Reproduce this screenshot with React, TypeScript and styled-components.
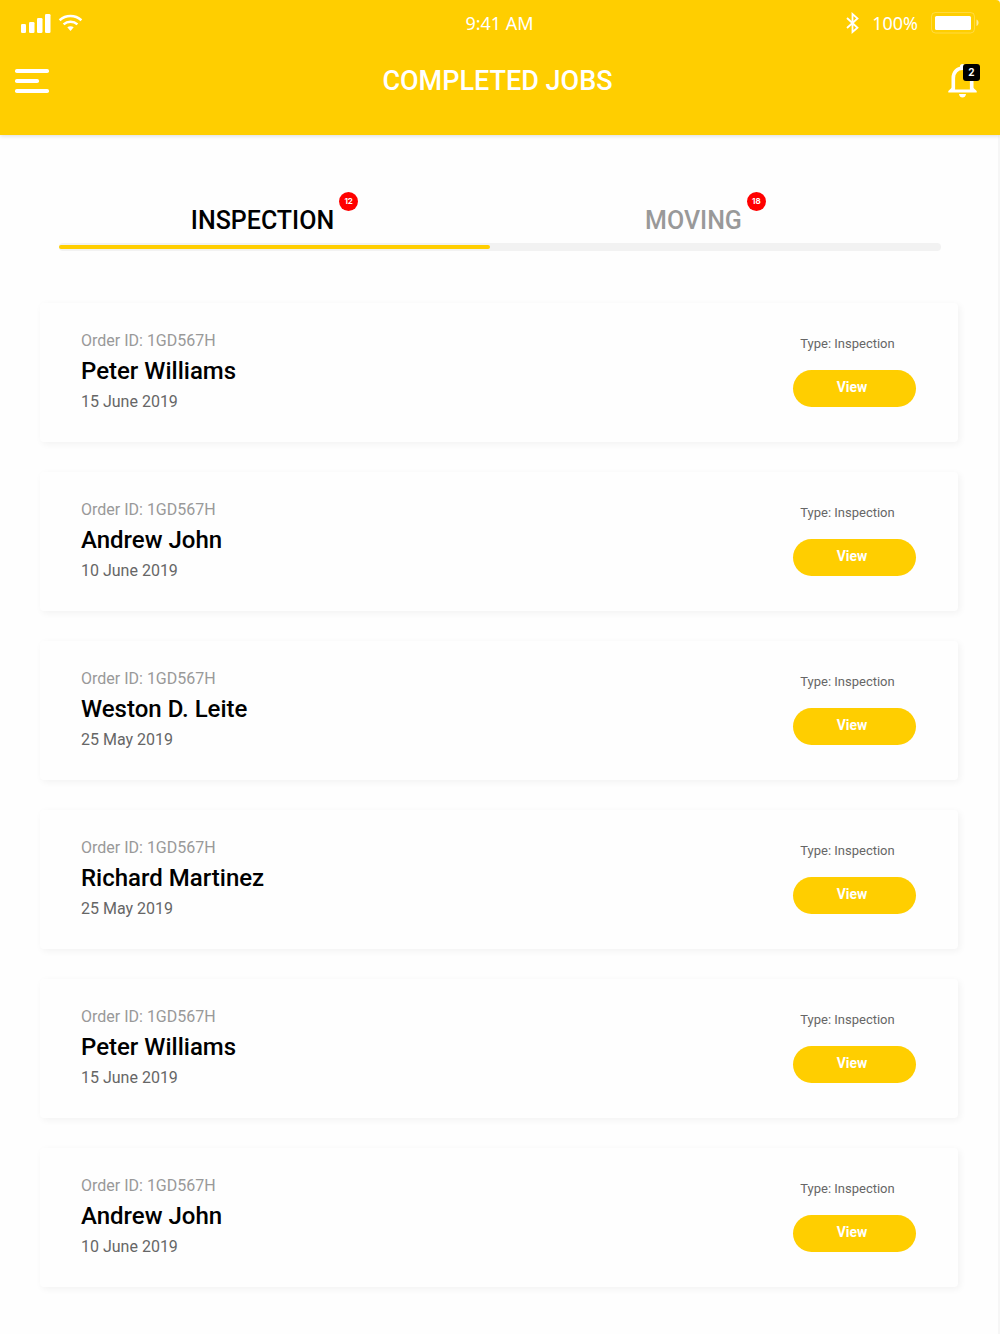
import React, { useState } from 'react';
import styled, { createGlobalStyle } from 'styled-components';

const YELLOW = '#ffce00';

const GlobalStyle = createGlobalStyle`
  * { box-sizing: border-box; }
  body {
    margin: 0;
    background: #fefefe;
    font-family: Roboto, 'Liberation Sans', sans-serif;
    color: #000;
  }
  h1, h2, p, ul { margin: 0; padding: 0; }
  button { border: 0; padding: 0; background: none; font-family: inherit; cursor: pointer; }
`;

const Screen = styled.div`
  min-height: 100vh;
  display: flex;
  flex-direction: column;
`;

const Header = styled.header`
  background: ${YELLOW};
  color: #fff;
  border-top-right-radius: 4px;
  padding-bottom: 34px;
  box-shadow: 0 1px 4px rgba(0, 0, 0, 0.14);
  z-index: 1;
`;

const StatusBar = styled.div`
  display: grid;
  grid-template-columns: 1fr auto 1fr;
  align-items: center;
  height: 46px;
  padding: 0 21px 0 20px;
  font-family: 'Noto Sans', 'Open Sans', sans-serif;
  font-size: 18px;
  line-height: 26px;
  font-weight: 400;
`;

const StatusGroup = styled.div<{ $end?: boolean }>`
  display: flex;
  align-items: center;
  justify-content: ${(p) => (p.$end ? 'flex-end' : 'flex-start')};
  gap: ${(p) => (p.$end ? 13 : 7)}px;
`;

const TitleBar = styled.div`
  display: grid;
  grid-template-columns: 1fr auto 1fr;
  align-items: center;
  height: 55px;
  padding: 15px 20px 0 15px;
`;

const Title = styled.h1`
  font-size: 27px;
  line-height: 40px;
  font-weight: 500;
`;

const MenuButton = styled.button`
  display: flex;
  justify-self: start;
`;

const BellButton = styled.button`
  display: flex;
  justify-self: end;
  position: relative;
  padding-right: 3px;
`;

const BellCount = styled.span`
  position: absolute;
  top: 0;
  right: 0;
  width: 17px;
  height: 17px;
  border-radius: 3px;
  background: #000;
  color: #fff;
  font-family: Inter, sans-serif;
  font-size: 10px;
  line-height: 17px;
  font-weight: 700;
  text-align: center;
`;

const Main = styled.main`
  flex: 1;
  padding: 57px 40px 45px;
  border-right: 2px solid #f6f6f6;
`;

const Tabs = styled.div`
  padding: 0 17px 0 19px;
`;

const TabList = styled.div`
  display: grid;
  grid-template-columns: 1fr 1fr;
  padding-right: 20px;
`;

const Tab = styled.button<{ $active: boolean }>`
  display: flex;
  justify-content: center;
  align-items: flex-start;
  gap: 5px;
  height: 51px;
  font-size: 25px;
  line-height: 30px;
  font-weight: 500;
  color: ${(p) => (p.$active ? '#000' : '#999')};
`;

const TabLabel = styled.span`
  padding-top: 14px;
`;

const TabCount = styled.span`
  width: 19px;
  height: 19px;
  border-radius: 50%;
  background: #ff0000;
  color: #fff;
  font-family: Inter, sans-serif;
  font-size: 8px;
  line-height: 19px;
  font-weight: 700;
`;

const Track = styled.div`
  display: grid;
  grid-template-columns: 1fr 1fr;
  padding: 2px 20px 2px 0;
  border-radius: 4px;
  background: #f2f2f2;
`;

const Indicator = styled.div<{ $column: number }>`
  grid-column: ${(p) => p.$column};
  height: 4px;
  border-radius: 2px;
  background: ${YELLOW};
`;

const JobList = styled.ul`
  display: flex;
  flex-direction: column;
  gap: 30px;
  padding-top: 52px;
  list-style: none;
`;

const JobCard = styled.li`
  display: flex;
  justify-content: space-between;
  align-items: flex-start;
  padding: 26px 42px 27px 41px;
  border-radius: 4px;
  background: #fefefe;
  box-shadow: 2px 2px 7px rgba(0, 0, 0, 0.05);
`;

const OrderId = styled.p`
  font-size: 16px;
  line-height: 24px;
  color: #999;
`;

const Customer = styled.h2`
  font-size: 24px;
  line-height: 36px;
  font-weight: 500;
`;

const JobDate = styled.p`
  font-size: 16px;
  line-height: 26px;
  color: #666;
`;

const JobSide = styled.div`
  display: flex;
  flex-direction: column;
  gap: 16px;
  width: 123px;
  padding-top: 5px;
`;

const JobType = styled.p`
  padding-right: 14px;
  font-size: 13px;
  line-height: 20px;
  text-align: center;
  color: #666;
`;

const ViewButton = styled.button`
  height: 37px;
  padding: 0 5px 3px 0;
  border-radius: 19px;
  background: ${YELLOW};
  color: #fff;
  font-size: 14px;
  line-height: 20px;
  font-weight: 700;
`;

const SignalIcon = () => (
  <svg width="31" height="19" viewBox="0 0 31 19" fill="#fff" aria-hidden="true">
    <rect x="1" y="10" width="5" height="9" rx="1.3" />
    <rect x="9" y="8" width="5.5" height="11" rx="1.3" />
    <rect x="17" y="4" width="5.5" height="15" rx="1.3" />
    <rect x="25" y="0" width="5.5" height="19" rx="1.3" />
  </svg>
);

const WifiIcon = () => (
  <svg width="26" height="18" viewBox="0 0 26 18" fill="none" stroke="#fff" strokeWidth="2.5" aria-hidden="true">
    <path d="M1.6 6.2C7.900.700 17.100.700 23.400 6.200" />
    <path d="M5.600 10.400c3.800-3.500 10-3.500 13.800 0" />
    <path d="M9.300 13.200c1.800-1.300 4.600-1.300 6.400 0L12.500 17z" fill="#fff" stroke="none" />
  </svg>
);

const BluetoothIcon = () => (
  <svg width="13" height="22" viewBox="0 0 13 22" fill="none" stroke="#fff" strokeWidth="1.8" aria-hidden="true">
    <path d="M1 6l10.500 9.800L6.500 20V2L11.500 6.400 1 16" />
  </svg>
);

const BatteryIcon = () => (
  <svg width="48" height="22" viewBox="0 0 48 22" aria-hidden="true">
    <rect x="0.5" y="0.5" width="43" height="20.5" rx="4" fill="none" stroke="#fff" strokeOpacity="0.25" />
    <rect x="4" y="4" width="36" height="14" rx="1.5" fill="#fff" />
    <path d="M45.5 7.5c2.7 1 2.7 5.5 0 6.5z" fill="#fff" fillOpacity="0.6" />
  </svg>
);

const MenuIcon = () => (
  <svg width="34" height="24" viewBox="0 0 34 24" fill="#fff" aria-hidden="true">
    <rect width="34" height="4" rx="1.8" />
    <rect y="10" width="24" height="4" rx="1.8" />
    <rect y="20" width="34" height="4" rx="1.8" />
  </svg>
);

const BellIcon = () => (
  <svg width="29" height="34" viewBox="0 0 29 34" fill="none" aria-hidden="true">
    <path d="M5.3 26.5V14c0-5.600 3.800-9.700 9.200-9.700s9.200 4.100 9.200 9.700v12.500" stroke="#fff" strokeWidth="3.6" />
    <circle cx="14.5" cy="2.6" r="2.6" fill="#fff" />
    <path d="M4 23.500L.300 27v1.500h28.400V27L25 23.500v2H4z" fill="#fff" />
    <path d="M11 30h7c-.300 2.300-1.700 3.600-3.500 3.600S11.300 32.300 11 30z" fill="#fff" />
  </svg>
);

const tabs = [
  { label: 'INSPECTION', count: 12 },
  { label: 'MOVING', count: 18 },
];

const jobs = [
  { name: 'Peter Williams', date: '15 June 2019' },
  { name: 'Andrew John', date: '10 June 2019' },
  { name: 'Weston D. Leite', date: '25 May 2019' },
  { name: 'Richard Martinez', date: '25 May 2019' },
  { name: 'Peter Williams', date: '15 June 2019' },
  { name: 'Andrew John', date: '10 June 2019' },
];

export default function App() {
  const [active, setActive] = useState(0);

  return (
    <Screen>
      <GlobalStyle />
      <Header>
        <StatusBar>
          <StatusGroup>
            <SignalIcon />
            <WifiIcon />
          </StatusGroup>
          <span>9:41 AM</span>
          <StatusGroup $end>
            <BluetoothIcon />
            <span>100%</span>
            <BatteryIcon />
          </StatusGroup>
        </StatusBar>
        <TitleBar>
          <MenuButton aria-label="Menu">
            <MenuIcon />
          </MenuButton>
          <Title>COMPLETED JOBS</Title>
          <BellButton aria-label="Notifications">
            <BellIcon />
            <BellCount>2</BellCount>
          </BellButton>
        </TitleBar>
      </Header>
      <Main>
        <Tabs>
          <TabList role="tablist">
            {tabs.map((tab, i) => (
              <Tab
                key={tab.label}
                role="tab"
                aria-selected={active === i}
                $active={active === i}
                onClick={() => setActive(i)}
              >
                <TabLabel>{tab.label}</TabLabel>
                <TabCount>{tab.count}</TabCount>
              </Tab>
            ))}
          </TabList>
          <Track>
            <Indicator $column={active + 1} />
          </Track>
        </Tabs>
        <JobList>
          {jobs.map((job, i) => (
            <JobCard key={i}>
              <div>
                <OrderId>Order ID: 1GD567H</OrderId>
                <Customer>{job.name}</Customer>
                <JobDate>{job.date}</JobDate>
              </div>
              <JobSide>
                <JobType>Type: Inspection</JobType>
                <ViewButton>View</ViewButton>
              </JobSide>
            </JobCard>
          ))}
        </JobList>
      </Main>
    </Screen>
  );
}
